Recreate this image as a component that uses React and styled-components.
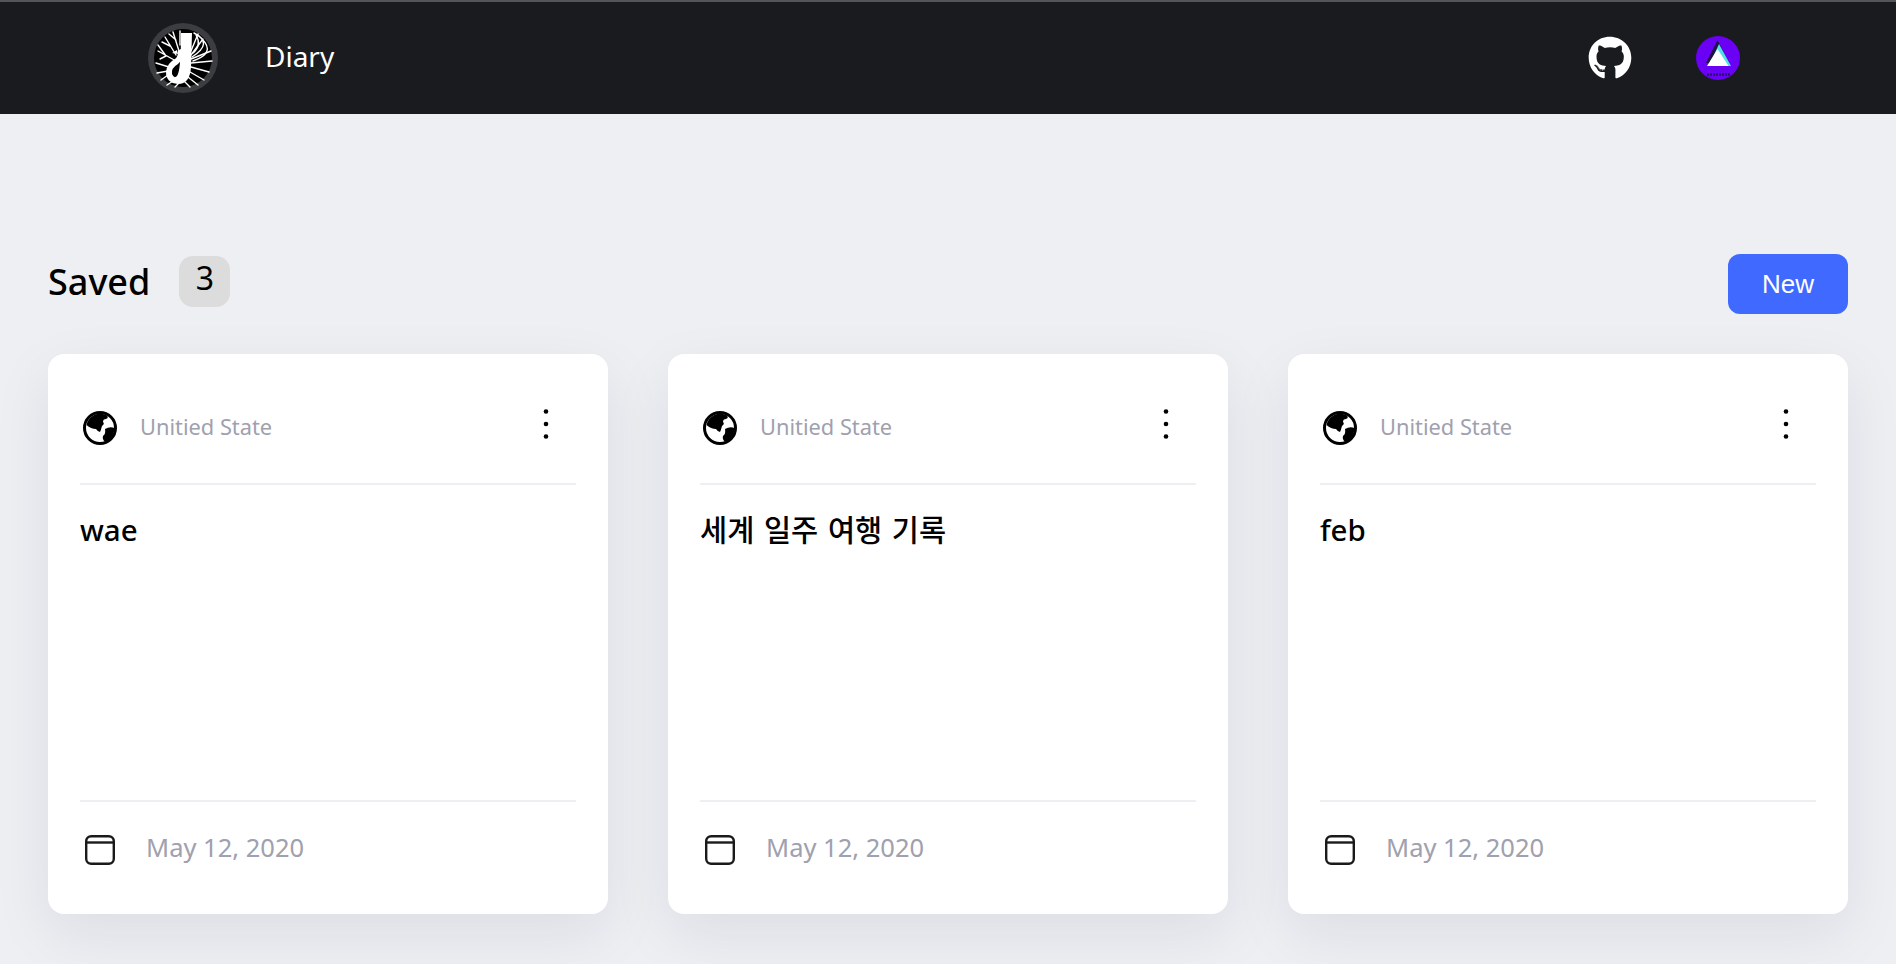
import React from "react";
import styled, { createGlobalStyle } from "styled-components";
import { FaGithub } from "react-icons/fa";

const GlobalStyle = createGlobalStyle`
  html, body {
    margin: 0;
    padding: 0;
    background: #eeeff3;
    font-family: "Noto Sans", "Noto Sans CJK KR", sans-serif;
    overflow: hidden;
  }
  * {
    box-sizing: border-box;
  }
`;

const Page = styled.div`
  width: 1896px;
  height: 964px;
  overflow: hidden;
`;

const TopBar = styled.header`
  display: flex;
  align-items: center;
  height: 114px;
  padding-left: 148px;
  background: #1a1b1f;
  border-top: 2px solid #555659;
`;

const Brand = styled.div`
  font-size: 28px;
  color: #fff;
  margin-left: 47px;
  margin-top: -4px;
`;

const TopIcons = styled.div`
  display: flex;
  align-items: center;
  margin-left: auto;
  margin-right: 156px;
  gap: 64px;
  color: #fff;
`;

const Main = styled.main`
  padding: 140px 48px 0;
`;

const Heading = styled.div`
  display: flex;
  align-items: center;
  height: 60px;
`;

const Title = styled.h2`
  margin: -6px 0 0;
  font-size: 36px;
  font-weight: 500;
  color: #000;
`;

const Count = styled.span`
  display: flex;
  justify-content: center;
  width: 51px;
  height: 51px;
  margin-left: 29px;
  margin-top: -6px;
  border-radius: 14px;
  background: #dcdcdc;
  font-size: 32px;
  line-height: 44px;
  color: #000;
`;

const NewButton = styled.button`
  width: 120px;
  height: 60px;
  margin-left: auto;
  border: none;
  border-radius: 12px;
  background: #4069ff;
  color: #fff;
  font-family: "Liberation Sans", sans-serif;
  font-size: 26px;
`;

const Cards = styled.div`
  display: grid;
  grid-template-columns: repeat(3, 560px);
  gap: 60px;
  margin-top: 40px;
`;

const Card = styled.article`
  display: flex;
  flex-direction: column;
  height: 560px;
  padding: 0 32px;
  border-radius: 16px;
  background: #fff;
  box-shadow: 0 20px 60px rgba(30, 30, 50, 0.08);
`;

const CardTop = styled.div`
  display: flex;
  align-items: center;
  height: 131px;
  padding-top: 19px;
  border-bottom: 2px solid #eeeff3;
`;

const GlobeIcon = styled.svg`
  margin-left: 2px;
`;

const Place = styled.span`
  margin-left: 22px;
  margin-top: -3px;
  font-size: 21.8px;
  color: #a0a0ae;
`;

const Dots = styled.svg`
  margin-left: auto;
  margin-right: 27px;
  margin-top: -8px;
`;

const CardBody = styled.div`
  flex: 1;
  padding-top: 24px;
  font-size: 29.5px;
  font-weight: 500;
  word-spacing: 2px;
  line-height: 42px;
  color: #000;
`;

const CardBottom = styled.div`
  display: flex;
  align-items: center;
  height: 114px;
  padding-bottom: 16px;
  border-top: 2px solid #eeeff3;
`;

const CalendarIcon = styled.svg`
  margin-left: 5px;
`;

const DateText = styled.span`
  margin-left: 31px;
  margin-top: -6px;
  font-size: 25.5px;
  color: #a0a0ae;
`;

const Logo = () => (
  <svg width="70" height="70" viewBox="0 0 70 70">
    <circle cx="35" cy="35" r="35" fill="#3c3d40" />
    <circle cx="35" cy="35" r="29" fill="#000" />
    <g stroke="#fff" strokeWidth="1.4" fill="none" strokeLinecap="round">
      <path d="M28 38 L10 28 M18 33 L12 36 M18 33 L10 22 M28 32 L17 14 M22 23 L14 19 M31 28 L25 9 M28 17 L21 11 M32 22 L32 8" />
      <path d="M21 44 L8 40 M20 48 L9 50 M20 52 L13 57 M25 58 L19 62 M30 61 L27 64" />
      <path d="M43 28 L50 11 M43 32 L55 16 M43 36 L63 28 M43 40 L64 38 M43 44 L61 49 M42 49 L56 57 M40 54 L50 62 M36 58 L42 64" />
      <path d="M46 10 Q66 20 44 34 M54 16 Q68 30 45 38 M48 12 Q54 22 45 30" />
    </g>
    <path d="M33 10 L44 10 L43 44 Q42 61 30 61 Q18 60 18 49 Q19 40 27 36 Q30 34 30 28 L34 25 Q35 37 30 41 Q23 45 24 51 Q26 56 29 53 Q33 48 33 10 Z" fill="#fff" />
    <path d="M29 27 L24 30 L30 31 Z" fill="#fff" />
  </svg>
);

const Avatar = () => (
  <svg width="44" height="44" viewBox="0 0 44 44">
    <circle cx="22" cy="22" r="22" fill="#6a00f4" />
    <path d="M21.5 4 L33 27 L10 27 Z" fill="#1c1340" />
    <path d="M23 8 L35 30 L13 30 Z" fill="#4fe0e8" />
    <path d="M21.5 13 L32.5 30 L11 30 Z" fill="#fff" />
    <path d="M11 38.5 H34" stroke="#2a0a70" strokeWidth="2.4" strokeDasharray="2 1" />
  </svg>
);

const Globe = () => (
  <GlobeIcon width="36" height="36" viewBox="0 0 36 36">
    <circle cx="18" cy="18" r="15.5" fill="#fff" stroke="#000" strokeWidth="3" />
    <path d="M4.5 15 A14 14 0 0 1 25 5.5 Q27 8 24 9 Q21 9 21 12 Q23 14 20 16 Q19 20 18 22 Q16 22 14 19 Q9 19 4.5 15 Z" fill="#000" />
    <path d="M23 19 Q28 16 32.5 18 A14.5 14.5 0 0 1 23 32 Q20 29 21 26 Q24 24 23 19 Z" fill="#000" />
  </GlobeIcon>
);

const Calendar = () => (
  <CalendarIcon width="30" height="30" viewBox="0 0 30 30" fill="none" stroke="#1a1a1a" strokeWidth="2.4">
    <rect x="1.2" y="1.2" width="27.6" height="27.6" rx="5" />
    <path d="M1.2 7.5 H28.8" />
  </CalendarIcon>
);

const MenuDots = () => (
  <Dots width="6" height="30" viewBox="0 0 6 30" fill="#000">
    <circle cx="3" cy="2.5" r="2.3" />
    <circle cx="3" cy="15" r="2.3" />
    <circle cx="3" cy="27.5" r="2.3" />
  </Dots>
);

const diaries = [
  { id: 1, title: "wae" },
  { id: 2, title: "세계 일주 여행 기록" },
  { id: 3, title: "feb" },
];

const App = () => {
  return (
    <Page>
      <GlobalStyle />
      <TopBar>
        <Logo />
        <Brand>Diary</Brand>
        <TopIcons>
          <FaGithub size={44} />
          <Avatar />
        </TopIcons>
      </TopBar>
      <Main>
        <Heading>
          <Title>Saved</Title>
          <Count>{diaries.length}</Count>
          <NewButton>New</NewButton>
        </Heading>
        <Cards>
          {diaries.map((diary) => (
            <Card key={diary.id}>
              <CardTop>
                <Globe />
                <Place>Unitied State</Place>
                <MenuDots />
              </CardTop>
              <CardBody>{diary.title}</CardBody>
              <CardBottom>
                <Calendar />
                <DateText>May 12, 2020</DateText>
              </CardBottom>
            </Card>
          ))}
        </Cards>
      </Main>
    </Page>
  );
};

export default App;
